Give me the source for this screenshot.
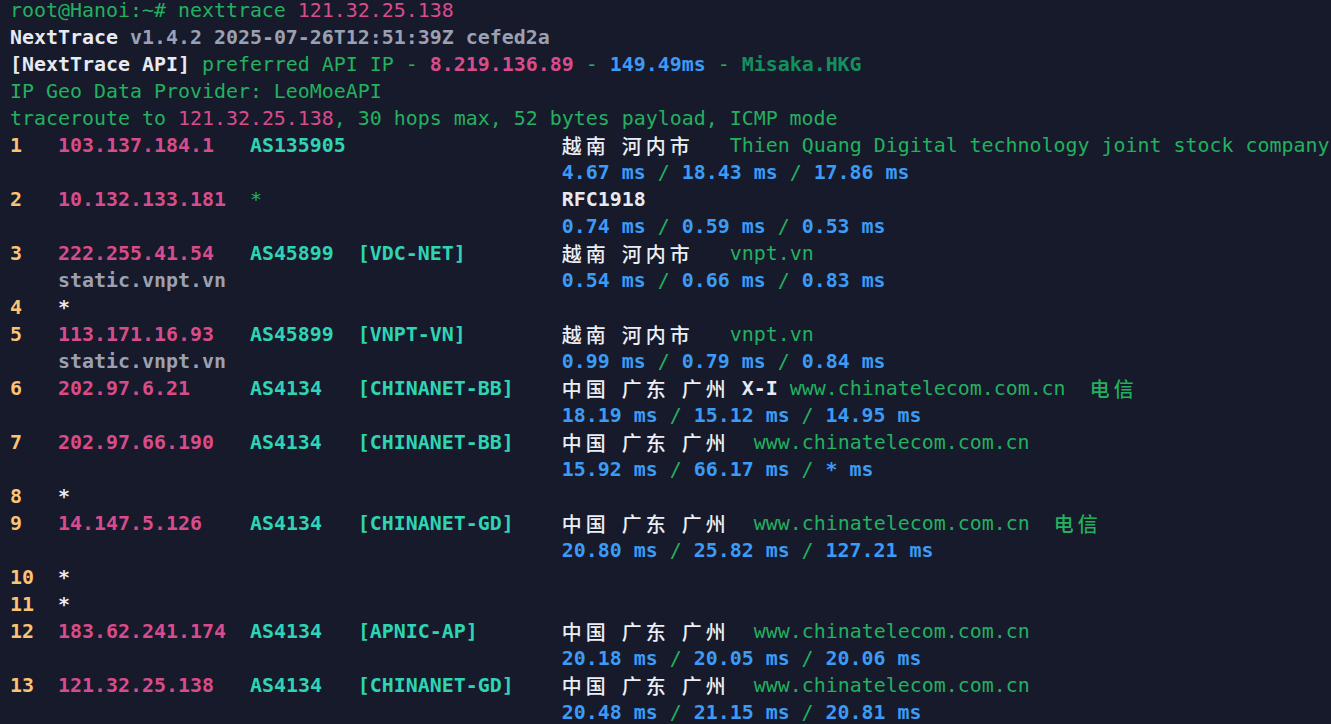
import React from 'react';

// terminal palette
const G = 'text-[#23b15f]';
const P = 'text-[#d94c8c]';
const PB = 'text-[#d94c8c] font-bold';
const W = 'text-[#eceef5]';
const WB = 'text-[#e8eaf2] font-bold';
const GR = 'text-[#9ca0b3] font-bold';
const B = 'text-[#3b9bf5] font-bold';
const DG = 'text-[#14905f] font-bold';
const T = 'text-[#2fd4b4] font-bold';
const O = 'text-[#fcc373] font-bold';

type Seg = [number | null, string, string];

const isWide = (ch: string) => /[\u2e80-\u9fff\uff00-\uffef]/.test(ch);
const width = (s: string) => [...s].reduce((n, ch) => n + (isWide(ch) ? 2 : 1), 0);

function Cells({ text, cls }: { text: string; cls: string }) {
    const parts: React.ReactNode[] = [];
    let buf = '';
    [...text].forEach((ch, i) => {
        if (isWide(ch)) {
            if (buf) parts.push(buf);
            buf = '';
            parts.push(
                <span
                    key={i}
                    className="inline-block w-[24px] h-[27px] align-top leading-[27px] text-left font-['Noto_Sans_CJK_SC',sans-serif] font-medium"
                >
                    {ch}
                </span>
            );
        } else buf += ch;
    });
    if (buf) parts.push(buf);
    return <span className={cls}>{parts}</span>;
}

function Line({ segs }: { segs: Seg[] }) {
    let col = 0;
    const out: React.ReactNode[] = [];
    segs.forEach(([at, text, cls], i) => {
        if (at !== null && at > col) {
            out.push(' '.repeat(at - col));
            col = at;
        }
        out.push(<Cells key={i} text={text} cls={cls} />);
        col += width(text);
    });
    return <div className="h-[27px] whitespace-pre">{out.length ? out : ' '}</div>;
}

const ms = (a: string, b: string, c: string): Seg[] => [
    [46, a, B],
    [null, ' / ', G],
    [null, b, B],
    [null, ' / ', G],
    [null, c, B],
];

const hop = (n: string, ip: string, as: string, name: string, geo: Seg[]): Seg[] => [
    [0, n, O],
    [4, ip, PB],
    [20, as, T],
    [29, name, T],
    ...geo,
];

const gd = (extra: Seg[] = []): Seg[] => [
    [46, '中国 广东 广州', W],
    [62, 'www.chinatelecom.com.cn', G],
    ...extra,
];

const lines: Seg[][] = [
    [[0, 'root@Hanoi:~# nexttrace ', G], [null, '121.32.25.138', P]],
    [[0, 'NextTrace ', WB], [null, 'v1.4.2 2025-07-26T12:51:39Z cefed2a', GR]],
    [
        [0, '[NextTrace API]', WB],
        [null, ' preferred API IP - ', G],
        [null, '8.219.136.89', PB],
        [null, ' - ', G],
        [null, '149.49ms', B],
        [null, ' - ', G],
        [null, 'Misaka.HKG', DG],
    ],
    [[0, 'IP Geo Data Provider: LeoMoeAPI', G]],
    [
        [0, 'traceroute to ', G],
        [null, '121.32.25.138', P],
        [null, ', 30 hops max, 52 bytes payload, ICMP mode', G],
    ],
    hop('1', '103.137.184.1', 'AS135905', '', [
        [46, '越南 河内市', W],
        [60, 'Thien Quang Digital technology joint stock company', G],
    ]),
    ms('4.67 ms', '18.43 ms', '17.86 ms'),
    [
        [0, '2', O],
        [4, '10.132.133.181', PB],
        [20, '*', G],
        [46, 'RFC1918', WB],
    ],
    ms('0.74 ms', '0.59 ms', '0.53 ms'),
    hop('3', '222.255.41.54', 'AS45899', '[VDC-NET]', [
        [46, '越南 河内市', W],
        [60, 'vnpt.vn', G],
    ]),
    [[4, 'static.vnpt.vn', GR], ...ms('0.54 ms', '0.66 ms', '0.83 ms')],
    [[0, '4', O], [4, '*', WB]],
    hop('5', '113.171.16.93', 'AS45899', '[VNPT-VN]', [
        [46, '越南 河内市', W],
        [60, 'vnpt.vn', G],
    ]),
    [[4, 'static.vnpt.vn', GR], ...ms('0.99 ms', '0.79 ms', '0.84 ms')],
    hop('6', '202.97.6.21', 'AS4134', '[CHINANET-BB]', [
        [46, '中国 广东 广州', W],
        [61, 'X-I', WB],
        [65, 'www.chinatelecom.com.cn', G],
        [90, '电信', G],
    ]),
    ms('18.19 ms', '15.12 ms', '14.95 ms'),
    hop('7', '202.97.66.190', 'AS4134', '[CHINANET-BB]', gd()),
    ms('15.92 ms', '66.17 ms', '* ms'),
    [[0, '8', O], [4, '*', WB]],
    hop('9', '14.147.5.126', 'AS4134', '[CHINANET-GD]', gd([[87, '电信', G]])),
    ms('20.80 ms', '25.82 ms', '127.21 ms'),
    [[0, '10', O], [4, '*', WB]],
    [[0, '11', O], [4, '*', WB]],
    hop('12', '183.62.241.174', 'AS4134', '[APNIC-AP]', gd()),
    ms('20.18 ms', '20.05 ms', '20.06 ms'),
    hop('13', '121.32.25.138', 'AS4134', '[CHINANET-GD]', gd()),
    ms('20.48 ms', '21.15 ms', '20.81 ms'),
];

export default function App() {
    return (
        <div className="w-[1331px] h-[724px] overflow-hidden bg-[#161a2b] pl-[10px]">
            <div className="-mt-[3px] font-['DejaVu_Sans_Mono','Noto_Sans_CJK_SC',monospace] text-[19.93px] leading-[27px]">
                {lines.map((segs, i) => (
                    <Line key={i} segs={segs} />
                ))}
            </div>
        </div>
    );
}
